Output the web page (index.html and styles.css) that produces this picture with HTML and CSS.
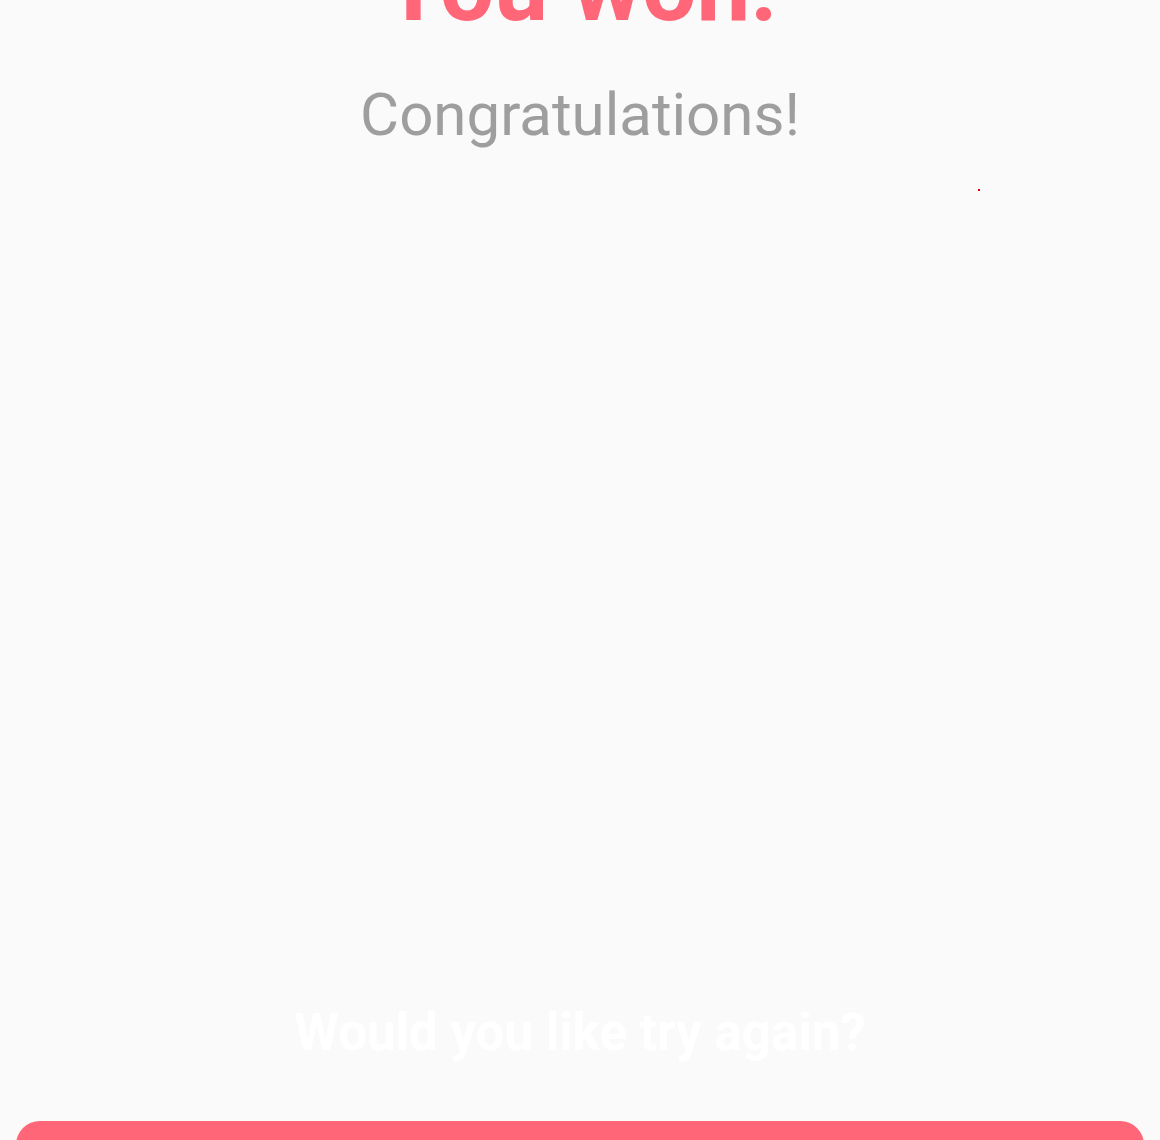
FILE: index.html
```html
<!DOCTYPE html>
<html lang="en">
<head>
<meta charset="utf-8">
<title>You won!</title>
<link rel="stylesheet" href="styles.css">
</head>
<body>
<main class="screen">
  <header class="result">
    <h1 class="result-title">You won!</h1>
    <p class="result-subtitle">Congratulations!</p>
  </header>
  <section class="stage" aria-hidden="true">
    <span class="spark"></span>
  </section>
  <footer class="retry">
    <p class="retry-question">Would you like try again?</p>
    <button class="retry-button" type="button" aria-label="Try again"></button>
  </footer>
</main>
</body>
</html>
```

FILE: styles.css
```css
html, body {
  margin: 0;
  padding: 0;
  background: #fafafa;
}

body {
  font-family: Roboto, "Liberation Sans", Arial, sans-serif;
  overflow: hidden;
  height: 1140px;
}

.screen {
  display: flex;
  flex-direction: column;
  padding: 0 16px;
}

.result {
  display: flex;
  flex-direction: column;
  align-items: center;
  margin-top: -61px;
}

.result-title {
  margin: 0;
  font-size: 96px;
  line-height: 1;
  font-weight: 700;
  color: #ff6678;
}

.result-subtitle {
  margin: 50px 0 0;
  font-size: 60px;
  line-height: 1;
  font-weight: 400;
  color: #9e9e9e;
}

.stage {
  position: relative;
  height: 862px;
}

.spark {
  position: absolute;
  left: 962px;
  top: 44px;
  width: 2px;
  height: 2px;
  background: #e00000;
}

.retry {
  display: flex;
  flex-direction: column;
  align-items: stretch;
}

.retry-question {
  margin: 0;
  text-align: center;
  font-size: 51px;
  line-height: 1;
  font-weight: 700;
  color: #ffffff;
}

.retry-button {
  margin-top: 63px;
  height: 80px;
  border: 0;
  border-radius: 24px;
  background: #ff6678;
}
```
